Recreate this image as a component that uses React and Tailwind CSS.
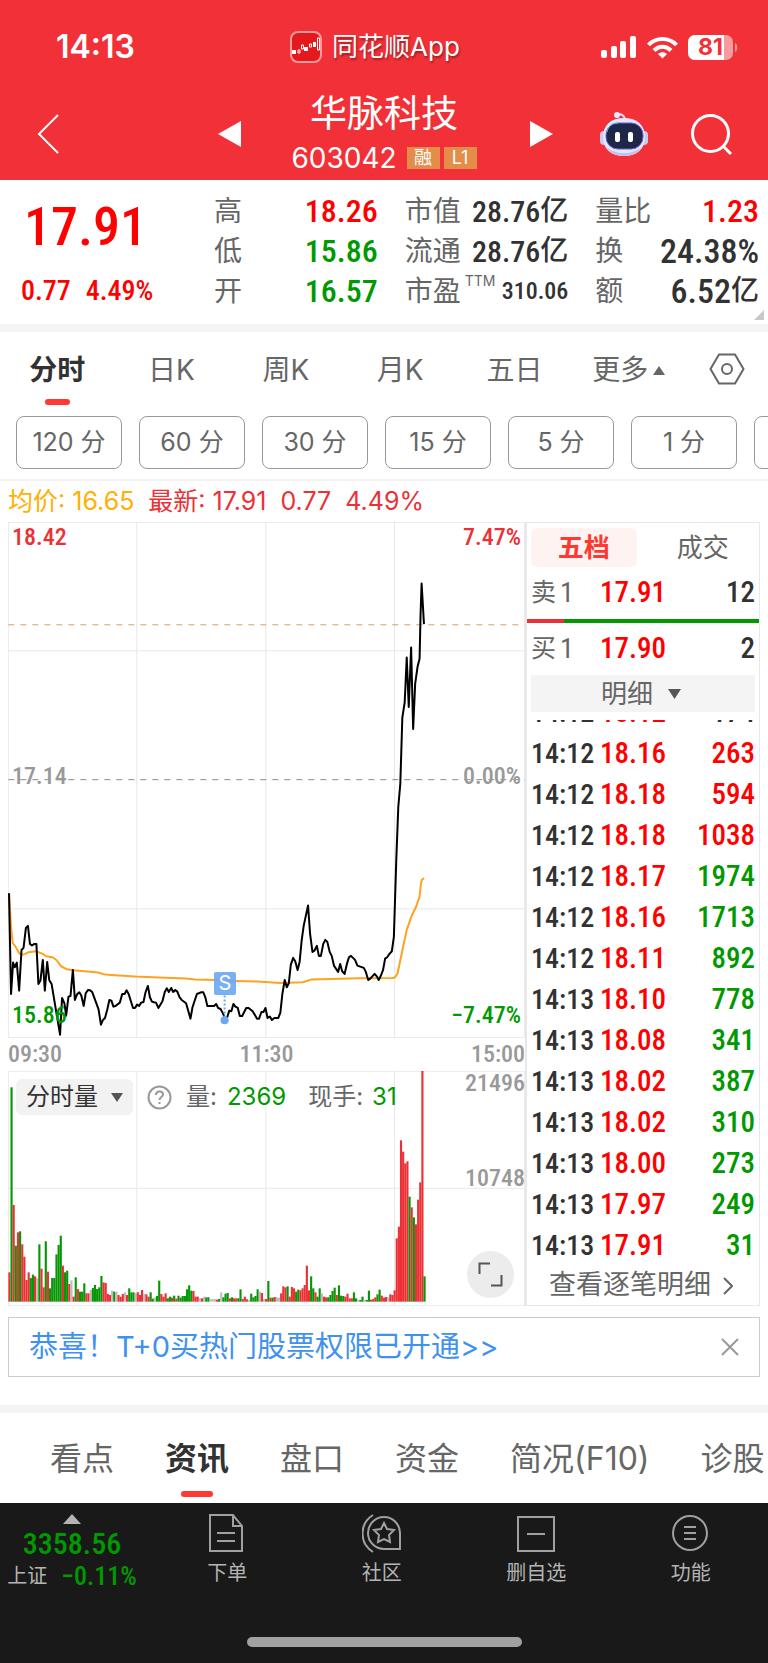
import React, { useState } from "react";

const NUM = "font-['Roboto_Condensed',Roboto,'Noto_Sans_CJK_SC',sans-serif]";

const quoteRows = [
  [
    { label: "高", value: "18.26", color: "text-[#ff0000]", size: "text-[32px]" },
    { label: "市值", value: "28.76", unit: "亿", color: "text-[#323232]", size: "text-[30px]" },
    { label: "量比", value: "1.23", color: "text-[#ff0000]", size: "text-[32px]" },
  ],
  [
    { label: "低", value: "15.86", color: "text-[#009900]", size: "text-[32px]" },
    { label: "流通", value: "28.76", unit: "亿", color: "text-[#323232]", size: "text-[30px]" },
    { label: "换", value: "24.38%", color: "text-[#323232]", size: "text-[34px]" },
  ],
  [
    { label: "开", value: "16.57", color: "text-[#009900]", size: "text-[32px]" },
    { label: "市盈", sup: "TTM", value: "310.06", color: "text-[#323232]", size: "text-[24px]" },
    { label: "额", value: "6.52", unit: "亿", color: "text-[#323232]", size: "text-[34px]" },
  ],
];

const periods = ["分时", "日K", "周K", "月K", "五日"];
const minutes = ["120 分", "60 分", "30 分", "15 分", "5 分", "1 分"];

const ticks = [
  ["14:12", "18.16", "263", "up"],
  ["14:12", "18.18", "594", "up"],
  ["14:12", "18.18", "1038", "up"],
  ["14:12", "18.17", "1974", "down"],
  ["14:12", "18.16", "1713", "down"],
  ["14:12", "18.11", "892", "down"],
  ["14:13", "18.10", "778", "down"],
  ["14:13", "18.08", "341", "down"],
  ["14:13", "18.02", "387", "down"],
  ["14:13", "18.02", "310", "down"],
  ["14:13", "18.00", "273", "down"],
  ["14:13", "17.97", "249", "down"],
  ["14:13", "17.91", "31", "down"],
];

const pricePoints =
  "26,278 32,580 38,486 43,500 49,486 56,570 63,448 69,442 76,382 82,376 88,430 94,435 101,430 107,430 113,550 119,540 126,478 132,570 139,484 145,538 152,550 177,702 183,592 190,608 195,645 202,588 208,586 215,508 221,598 228,580 234,575 240,585 247,616 253,578 260,568 266,569 272,574 291,626 298,672 304,658 310,652 317,626 323,598 329,600 335,618 341,616 354,606 361,580 368,580 374,569 380,580 393,622 399,622 405,612 411,616 417,606 424,604 430,575 437,556 443,590 449,603 455,605 461,606 468,622 480,602 487,574 493,563 499,574 506,562 512,574 518,568 524,573 531,590 537,598 550,608 563,654 569,620 582,580 595,575 601,575 607,590 613,616 633,616 639,610 645,622 652,625 658,636 665,652 671,652 678,630 684,632 690,610 696,618 703,622 709,646 716,646 728,622 735,622 747,632 760,654 766,654 773,634 779,634 785,622 791,652 798,648 804,658 811,652 823,652 829,636 835,580 842,538 848,560 854,548 860,492 867,472 873,482 880,508 886,484 892,420 898,376 911,315 917,400 924,454 930,450 937,436 943,466 949,466 956,430 962,418 968,424 975,454 981,466 988,496 1000,514 1006,490 1012,512 1019,520 1026,490 1032,470 1038,466 1050,478 1057,495 1076,502 1082,514 1089,538 1095,534 1108,520 1115,528 1120,538 1127,524 1133,508 1139,474 1145,470 1152,460 1159,452 1165,408 1172,180 1178,20 1184,-50 1190,-248 1197,-294 1203,-428 1209,-280 1216,-458 1222,-214 1228,-350 1235,-400 1241,-424 1244,-560 1247,-650 1254,-528";

const averagePoints =
  "26,278 32,380 37,428 44,436 56,458 64,463 74,460 84,455 106,452 126,460 136,467 155,470 167,479 180,497 195,505 215,509 250,512 290,516 310,522 340,524 400,528 470,531 550,534 575,537 640,538 700,541 760,543 830,547 895,545 920,537 980,535 1060,533 1160,532 1168,531 1176,518 1190,450 1203,388 1218,345 1231,318 1241,288 1245,250 1248,238 1254,233";

// one entry per minute: r = rise, g = fall, n = flat, then the volume
const volumes =
  "r88 g643 r290 g168 r208 g211 r172 r135 r65 r88 g71 g81 r76 n70 g172 r99 r43 g181 r90 g40 g71 g71 g142 g170 g198 r108 g88 g93 r53 n64 r15 g73 r38 g30 g30 g55 r25 r25 n35 g41 g50 g38 g43 g77 r58 r56 r23 r20 n33 g30 n30 r20 r15 r23 n28 r20 g40 g28 g28 n25 r28 r20 r35 n23 r22 r15 g28 g9 n13 g17 g63 r23 r15 r25 g10 g15 r12 g18 r9 g18 g12 g17 g17 g37 g49 g33 r32 r15 r15 n10 r10 n15 g13 g13 n8 n8 n8 r6 g8 n28 g13 g24 g26 r10 g13 r10 r10 g10 g37 r8 r15 r7 n6 g24 g13 g17 g37 n30 r26 n8 r8 g62 r12 g12 r14 n13 n12 r25 r46 r43 g46 r15 r44 r40 g30 g36 r34 r40 r50 r108 r34 g76 g40 r28 g15 g40 n25 r15 r13 g13 g20 g32 g42 r20 g49 g18 g17 r15 r24 r10 r10 g28 g10 n6 g5 g15 n5 g5 g33 r6 r8 r13 g22 g36 r18 r12 r14 n13 r22 r20 r34 r190 r225 r484 r450 r415 r421 g315 r283 g253 r232 r306 r358 r692 g76"
    .split(" ")
    .map((v) => ({ kind: v[0], size: Number(v.slice(1)) }));

const volumeColors = { r: "#eb3136", g: "#079606", n: "#bdbdbd" };

function StatusBar() {
  return (
    <div className="grid grid-cols-[1fr_auto_1fr] items-center h-[94px] text-white">
      <span className="pl-14 font-semibold text-[32px] leading-9">14:13</span>
      <div className="flex items-center gap-[10px] pr-[18px]">
        <svg className="w-8 h-8" viewBox="0 0 32 32" fill="none">
          <rect x="1" y="1" width="30" height="30" rx="7" fill="#e4191d" stroke="#f99a9c" strokeWidth="2" />
          <path d="M2 19h4v4H2zM14 16h4v4h-4zM23 11h3v5h-3z" fill="#fff" />
          <path d="M8 19h2v3H8zM11.500 14h2v4h-2zM19.500 13h2v3h-2zM27.500 7h2v12h-2z" stroke="#fff" strokeWidth="1" />
        </svg>
        <span className="text-[26px] leading-9 [text-shadow:1px_2px_2px_rgba(0,0,0,0.35)]">同花顺App</span>
      </div>
      <div className="flex justify-end items-center gap-[10px] pr-[30px]">
        <svg className="w-9 h-[23px]" viewBox="0 0 36 23" fill="#fff">
          <rect x="0" y="14" width="6" height="8" rx="2" />
          <rect x="10" y="10" width="6" height="12" rx="2" />
          <rect x="19" y="5" width="6" height="17" rx="2" />
          <rect x="29" y="0" width="6" height="22" rx="2" />
        </svg>
        <svg className="w-[31px] h-[23px]" viewBox="0 0 31 23" fill="none" stroke="#fff" strokeWidth="4">
          <path d="M1.500 9C9 1 22 1 29.500 9" />
          <path d="M7 14.500c5-5 12-5 17 0" />
          <path d="M15.500 22.500l-4.500-4.500c2.500-2.500 6.500-2.500 9 0z" fill="#fff" stroke="none" />
        </svg>
        <div className="relative flex items-center">
          <svg className="w-[50px] h-[25px]" viewBox="0 0 50 25">
            <rect width="45" height="25" rx="7" fill="#f99a9c" />
            <path d="M7 0h29v25H7a7 7 0 0 1-7-7V7a7 7 0 0 1 7-7z" fill="#fff" />
            <path d="M47 8c3 1 3 8 0 9z" fill="#f99a9c" />
          </svg>
          <span className="absolute inset-y-0 left-0 flex justify-center items-center w-[45px] font-bold text-[#f23037] text-[23px]">81</span>
        </div>
      </div>
    </div>
  );
}

function RobotIcon() {
  return (
    <svg className="w-[50px] h-12" viewBox="0 0 50 48" fill="none">
      <path d="M17 5c5-2 9 0 9 6" stroke="#e4e2fa" strokeWidth="2" />
      <circle cx="18" cy="5" r="3" fill="#e9e8fb" />
      <rect x="1" y="21" width="9" height="14" rx="4" fill="#c9c8ee" />
      <rect x="40" y="21" width="9" height="14" rx="4" fill="#c9c8ee" />
      <path d="M25 8c13 0 21 7 21 19S38 46 25 46 4 39 4 27 12 8 25 8z" fill="#e6e6fa" />
      <path d="M8 37c8 8 26 8 34 0-3 7-10 9-17 9s-14-2-17-9z" fill="#c3c2ea" />
      <rect x="7" y="13" width="37" height="26" rx="12" fill="#1e2748" stroke="#6a5ae0" strokeWidth="1" />
      <path d="M8 22c1-6 5-9 11-9" stroke="#3fd0e8" strokeWidth="1" />
      <rect x="16" y="22" width="5" height="10" rx="2" fill="#fff" />
      <rect x="29" y="22" width="5" height="10" rx="2" fill="#fff" />
    </svg>
  );
}

function TitleBar() {
  return (
    <div className="grid grid-cols-[1fr_auto_1fr] items-center h-[86px] text-white">
      <div className="flex justify-between items-center pr-[50px] pb-[6px] pl-9">
        <button aria-label="返回">
          <svg className="w-6 h-10" viewBox="0 0 24 40" fill="none" stroke="#fff" strokeWidth="2">
            <path d="M22 1L3 20l19 19" />
          </svg>
        </button>
        <button aria-label="上一只">
          <svg className="w-[23px] h-[26px]" viewBox="0 0 23 26" fill="#fff"><path d="M23 0v26L0 13z" /></svg>
        </button>
      </div>
      <div className="flex flex-col items-center gap-[10px] pb-2">
        <h1 className="text-[37px] leading-10">华脉科技</h1>
        <div className="flex items-center gap-1 h-7">
          <span className="pr-[6px] text-[28px] leading-7">603042</span>
          <span className="bg-[#e38d49] w-[33px] h-[22px] text-[18px] text-center leading-[22px]">融</span>
          <span className="bg-[#e38d49] w-[33px] h-[22px] text-[18px] text-center leading-[22px]">L1</span>
        </div>
      </div>
      <div className="flex justify-between items-center pr-9 pb-[6px] pl-[53px]">
        <button aria-label="下一只">
          <svg className="w-[23px] h-[26px]" viewBox="0 0 23 26" fill="#fff"><path d="M0 0v26l23-13z" /></svg>
        </button>
        <div className="flex items-center gap-[42px]">
          <button aria-label="智能助手"><RobotIcon /></button>
          <button aria-label="搜索">
            <svg className="w-[41px] h-[41px]" viewBox="0 0 41 41" fill="none" stroke="#fff" strokeWidth="3">
              <circle cx="19.500" cy="19.500" r="18" />
              <path d="M32 32l8 8" />
            </svg>
          </button>
        </div>
      </div>
    </div>
  );
}

function QuoteCell({ item }) {
  return (
    <div className="flex justify-between items-center h-10">
      <span className="flex text-[#666] text-[28px] leading-10">
        {item.label}
        {item.sup && <sup className="top-0 pt-[2px] pl-1 text-[14px] leading-4">{item.sup}</sup>}
      </span>
      <span className={`${NUM} flex items-center font-medium ${item.size} ${item.color}`}>
        {item.value}
        {item.unit && <span className="text-[28px]">{item.unit}</span>}
      </span>
    </div>
  );
}

function Quote() {
  return (
    <section className="relative flex bg-white pt-[11px] pr-[9px] pb-[13px] border-[#f4f4f4] border-b-8">
      <div className={`${NUM} flex flex-col w-[214px] shrink-0 font-medium text-[#ff0000]`}>
        <span className="pl-6 text-[54px] leading-[72px]">17.91</span>
        <span className="flex gap-[15px] pt-[10px] pl-[21px] text-[28px] leading-9">
          <span>0.77</span>
          <span>4.49%</span>
        </span>
      </div>
      <div className="flex-1">
        {quoteRows.map((row, i) => (
          <div key={i} className="gap-[27px] grid grid-cols-3">
            {row.map((item) => <QuoteCell key={item.label} item={item} />)}
          </div>
        ))}
      </div>
      <svg className="right-1 bottom-1 absolute w-[10px] h-[10px]" viewBox="0 0 10 10"><path d="M10 0v10H0z" fill="#c9c9c9" /></svg>
    </section>
  );
}

function PeriodTabs() {
  const [period, setPeriod] = useState("分时");

  return (
    <section className="bg-white border-[#f2f2f2] border-b-2">
      <div className="flex items-start pt-[18px] h-[73px] text-[#666] text-[28px]">
        {periods.map((name) => (
          <button
            key={name}
            onClick={() => setPeriod(name)}
            className={name === period ? "flex flex-1 flex-col items-center font-bold text-[#323232]" : "flex flex-1 flex-col items-center"}
          >
            <span className="leading-10">{name}</span>
            {name === period && <span className="bg-[#ff3832] mt-[9px] rounded-[3px] w-[25px] h-[6px]"></span>}
          </button>
        ))}
        <button className="flex flex-1 justify-center items-center gap-[5px] leading-10">
          更多
          <svg className="w-3 h-[9px]" viewBox="0 0 12 9" fill="#666"><path d="M6 0l6 9H0z" /></svg>
        </button>
        <button aria-label="设置" className="flex justify-center pt-[3px] w-[82px]">
          <svg className="w-9 h-8" viewBox="0 0 36 32" fill="none" stroke="#666" strokeWidth="2">
            <path d="M10 1.500h16L34.500 16 26 30.500H10L1.500 16z" />
            <circle cx="18" cy="16" r="5" />
          </svg>
        </button>
      </div>
      <div className="flex gap-[17px] pt-[11px] pb-[10px] pl-4 overflow-hidden">
        {minutes.map((name) => (
          <button key={name} className="border border-[#999] rounded-lg w-[106px] h-[53px] text-[#666] text-[25px] shrink-0">
            {name}
          </button>
        ))}
        <button aria-label="更多周期" className="border border-[#999] rounded-lg w-[106px] h-[53px] shrink-0"></button>
      </div>
    </section>
  );
}

function PriceChart() {
  return (
    <div className="relative h-[516px]">
      <svg className="block w-full h-full" viewBox="23 -834 1530 1546" preserveAspectRatio="none" fill="none">
        <path
          d="M24 -833H1552V711H24zM404 -833V711M786 -833V711M1167 -833V711M24 -448H1552M24 325H1552"
          stroke="#e8e8e8" strokeWidth="1" vectorEffect="non-scaling-stroke"
        />
        <path d="M24 -526H1552" stroke="#d4a062" strokeWidth="1" strokeDasharray="6 6" vectorEffect="non-scaling-stroke" />
        <path d="M24 -62H1552" stroke="#8a8a8a" strokeWidth="1" strokeDasharray="6 6" vectorEffect="non-scaling-stroke" />
        <polyline points={averagePoints} stroke="#ffa21f" strokeWidth="2" strokeLinejoin="round" vectorEffect="non-scaling-stroke" />
        <polyline points={pricePoints} stroke="#000" strokeWidth="2" strokeLinejoin="round" vectorEffect="non-scaling-stroke" />
        <path d="M664 585V655" stroke="#6aa7f3" strokeWidth="2" strokeDasharray="2 2" vectorEffect="non-scaling-stroke" />
        <circle cx="664" cy="659" r="12" fill="#6aa7f3" />
      </svg>
      <div className={`${NUM} font-medium text-[24px] leading-6`}>
        <span className="top-[3px] left-1 absolute text-[#eb3136]">18.42</span>
        <span className="top-[3px] right-1 absolute text-[#eb3136]">7.47%</span>
        <span className="top-[242px] left-1 absolute text-[#999]">17.14</span>
        <span className="top-[242px] right-1 absolute text-[#999]">0.00%</span>
        <span className="bottom-[11px] left-1 absolute text-[#009900]">15.86</span>
        <span className="right-1 bottom-[11px] absolute text-[#009900]">−7.47%</span>
      </div>
      <span className="top-[450px] left-[40%] absolute bg-[#6aa7f3]/90 -ml-px rounded-xs w-[22px] h-[23px] text-[20px] text-white text-center leading-[23px]">S</span>
    </div>
  );
}

function VolumeChart() {
  return (
    <div className="relative h-[235px]">
      <svg className="block w-full h-full" viewBox="23 33 1530 705" preserveAspectRatio="none" fill="none">
        <path
          d="M24 34H1552V737H24zM404 34V737M786 34V737M1167 34V737M24 385H1552"
          stroke="#e8e8e8" strokeWidth="1" vectorEffect="non-scaling-stroke"
        />
        {volumes.map((v, i) => (
          <rect key={i} x={24 + i * 6.333} y={725 - v.size} width="6.333" height={v.size} fill={volumeColors[v.kind]} />
        ))}
      </svg>
      <div className="top-2 left-2 absolute flex items-center text-[#666] text-[24px] leading-9">
        <button className="flex items-center gap-[13px] bg-[#f2f2f2] px-[10px] rounded-md h-9 text-[#323232]">
          分时量
          <svg className="w-3 h-[9px]" viewBox="0 0 12 9" fill="#555"><path d="M0 0h12L6 9z" /></svg>
        </button>
        <svg className="ml-[14px] w-[25px] h-[25px]" viewBox="0 0 25 25" fill="none" stroke="#999" strokeWidth="2">
          <circle cx="12.500" cy="12.500" r="11" />
          <path d="M9 10c0-5 7-4.500 7-.5 0 2.500-3.500 2.500-3.500 5.500M12.500 17v2" />
        </svg>
        <span className="ml-[14px]">量:</span>
        <span className="ml-[10px] text-[#009900]">2369</span>
        <span className="ml-[22px]">现手:</span>
        <span className="ml-[9px] text-[#009900]">31</span>
      </div>
      <div className={`${NUM} font-medium text-[#999] text-[24px] leading-6`}>
        <span className="top-0 right-0 absolute">21496</span>
        <span className="top-[95px] right-0 absolute">10748</span>
      </div>
      <button aria-label="全屏" className="right-[11px] bottom-2 absolute flex justify-center items-center bg-[#ececec] rounded-full w-[47px] h-[47px]">
        <svg className="w-[25px] h-[25px]" viewBox="0 0 25 25" fill="none" stroke="#555" strokeWidth="2">
          <path d="M1.500 12V1.500H12M23.500 13v10.500H13" />
        </svg>
      </button>
    </div>
  );
}

function OrderBook() {
  return (
    <div className="flex flex-col border border-[#e8e8e8] border-l-2 h-[784px] overflow-hidden">
      <div className="grid grid-cols-[17fr_19fr] pt-[5px] pl-1 text-[26px]">
        <button className="bg-[#fff3f2] mr-[2px] rounded-md h-[39px] font-bold text-[#ff3832]">五档</button>
        <button className="pl-2 h-[39px] text-[#666]">成交</button>
      </div>
      <BookRow side="卖" price="17.91" volume="12" />
      <div className="flex h-1 shrink-0">
        <div className="bg-[#eb3136] w-[16%]"></div>
        <div className="flex-1 bg-[#009900]"></div>
      </div>
      <BookRow side="买" price="17.90" volume="2" />
      <button className="flex justify-center items-center gap-[15px] bg-[#f4f4f4] mr-1 ml-1 pr-1 h-[37px] text-[#666] text-[26px] shrink-0">
        明细
        <svg className="w-[13px] h-[10px]" viewBox="0 0 13 10" fill="#555"><path d="M0 0h13L6.500 10z" /></svg>
      </button>
      <div className="flex flex-col flex-1 justify-end mt-2 overflow-hidden">
        <table className={`${NUM} w-full font-medium text-[29px] leading-[41px]`}>
          <tbody>
            <TickRow tick={["14:12", "18.12", "174", "flat"]} />
            {ticks.map((tick, i) => <TickRow key={i} tick={tick} />)}
          </tbody>
        </table>
      </div>
      <a href="#ticks" className="flex justify-center items-center gap-3 pr-1 h-[39px] text-[#666] text-[27px] shrink-0">
        查看逐笔明细
        <svg className="w-[10px] h-[18px]" viewBox="0 0 10 18" fill="none" stroke="#666" strokeWidth="2"><path d="M1 1l8 8-8 8" /></svg>
      </a>
    </div>
  );
}

function BookRow({ side, price, volume }) {
  return (
    <div className={`${NUM} grid grid-cols-[69px_1fr_auto] items-center h-[52px] pr-1 pl-1 font-medium text-[29px] shrink-0`}>
      <span className="flex items-center gap-1 font-normal text-[#666] text-[25px]">
        {side}
        <span className="text-[28px]">1</span>
      </span>
      <span className="text-[#ff0000]">{price}</span>
      <span className="text-[#323232]">{volume}</span>
    </div>
  );
}

function TickRow({ tick }) {
  const [time, price, volume, trend] = tick;
  const color = trend === "up" ? "text-[#ff0000]" : trend === "down" ? "text-[#009900]" : "text-[#323232]";

  return (
    <tr>
      <td className="pl-1 w-[73px] text-[#323232] text-[28px] leading-[41px]">{time}</td>
      <td className="text-[#ff0000]">{price}</td>
      <td className={`pr-1 text-right ${color}`}>{volume}</td>
    </tr>
  );
}

function Charts() {
  return (
    <section className="px-2">
      <div className="flex gap-[14px] h-[41px] text-[#eb3136] text-[25px] leading-[41px]">
        <span className="text-[#ffb000]">均价: 16.65</span>
        <span className="flex gap-[14px]">
          <span>最新: 17.91</span>
          <span>0.77</span>
          <span>4.49%</span>
        </span>
      </div>
      <div className="grid grid-cols-[11fr_5fr]">
        <div>
          <PriceChart />
          <div className={`${NUM} flex justify-between h-[33px] font-medium text-[#999] text-[24px] leading-8`}>
            <span>09:30</span>
            <span>11:30</span>
            <span>15:00</span>
          </div>
          <VolumeChart />
        </div>
        <OrderBook />
      </div>
    </section>
  );
}

function Notice() {
  const [open, setOpen] = useState(true);
  if (!open) return null;

  return (
    <div className="flex justify-between items-center mx-2 mt-[11px] px-5 border border-[#ccc] h-[60px]">
      <a href="#notice" className="text-[#4191f0] text-[29px]">恭喜！T+0买热门股票权限已开通&gt;&gt;</a>
      <button aria-label="关闭" onClick={() => setOpen(false)}>
        <svg className="w-[18px] h-[18px]" viewBox="0 0 18 18" fill="none" stroke="#999" strokeWidth="2"><path d="M1 1l16 16M17 1L1 17" /></svg>
      </button>
    </div>
  );
}

function InfoTabs() {
  const [tab, setTab] = useState("资讯");
  const tabs = ["看点", "资讯", "盘口", "资金", "简况(F10)", "诊股"];

  return (
    <nav className="flex gap-[51px] mt-7 pt-[26px] pl-[50px] border-[#f4f4f4] border-t-8 h-[98px] overflow-hidden text-[#666] text-[32px]">
      {tabs.map((name) => (
        <button
          key={name}
          onClick={() => setTab(name)}
          className={name === tab ? "flex flex-col items-center font-bold text-[#323232] shrink-0" : "flex flex-col items-center shrink-0"}
        >
          <span className="leading-10">{name}</span>
          {name === tab && <span className="bg-[#ff3832] mt-3 rounded-[3px] w-8 h-[6px]"></span>}
        </button>
      ))}
    </nav>
  );
}

function BottomBar() {
  return (
    <footer className="bg-[#191919] text-[#b4b4b4]">
      <div className="flex pt-[11px] text-[20px]">
        <button className="flex flex-col items-center pr-2 pl-[2px] w-[150px]">
          <svg className="w-[18px] h-[10px]" viewBox="0 0 18 10" fill="#b4b4b4"><path d="M9 0l9 10H0z" /></svg>
          <span className={`${NUM} font-medium text-[#009900] text-[30px] leading-10`}>3358.56</span>
          <span className="flex items-center gap-[14px] leading-6">
            上证
            <span className={`${NUM} font-medium text-[#009900] text-[26px]`}>−0.11%</span>
          </span>
        </button>
        <NavButton label="下单">
          <path d="M2 1h23l9 11v25H2zM25 1v11h9M9 19h18M9 27h18" />
        </NavButton>
        <NavButton label="社区">
          <path d="M22 3a16 16 0 0 1 16 16v16H22a16 16 0 0 1 0-32z" />
          <path d="M11 1C-3 10-3 29 11 38" />
          <path d="M22 9l3 6 7 1-5 5 1 7-6-3-6 3 1-7-5-5 7-1z" />
        </NavButton>
        <NavButton label="删自选">
          <path d="M1 3h36v34H1zM10 20h18" />
        </NavButton>
        <NavButton label="功能">
          <circle cx="19" cy="19" r="17" />
          <path d="M13 13h12M13 19h12M13 25h12" />
        </NavButton>
      </div>
      <div className="flex justify-center pt-[49px] pb-[18px]">
        <div className="bg-[#a1a1a1] rounded-full w-[275px] h-[10px]"></div>
      </div>
    </footer>
  );
}

function NavButton({ label, children }) {
  return (
    <button className="flex flex-col flex-1 items-center gap-[6px]">
      <svg className="w-[39px] h-[39px]" viewBox="0 0 39 39" fill="none" stroke="#a0a0a0" strokeWidth="2">
        {children}
      </svg>
      <span className="leading-7">{label}</span>
    </button>
  );
}

function App() {
  return (
    <div className="bg-white font-[Inter,'Noto_Sans_CJK_SC',sans-serif]">
      <header className="bg-[#f23037]">
        <StatusBar />
        <TitleBar />
      </header>
      <Quote />
      <PeriodTabs />
      <Charts />
      <Notice />
      <InfoTabs />
      <BottomBar />
    </div>
  );
}

export default App;
